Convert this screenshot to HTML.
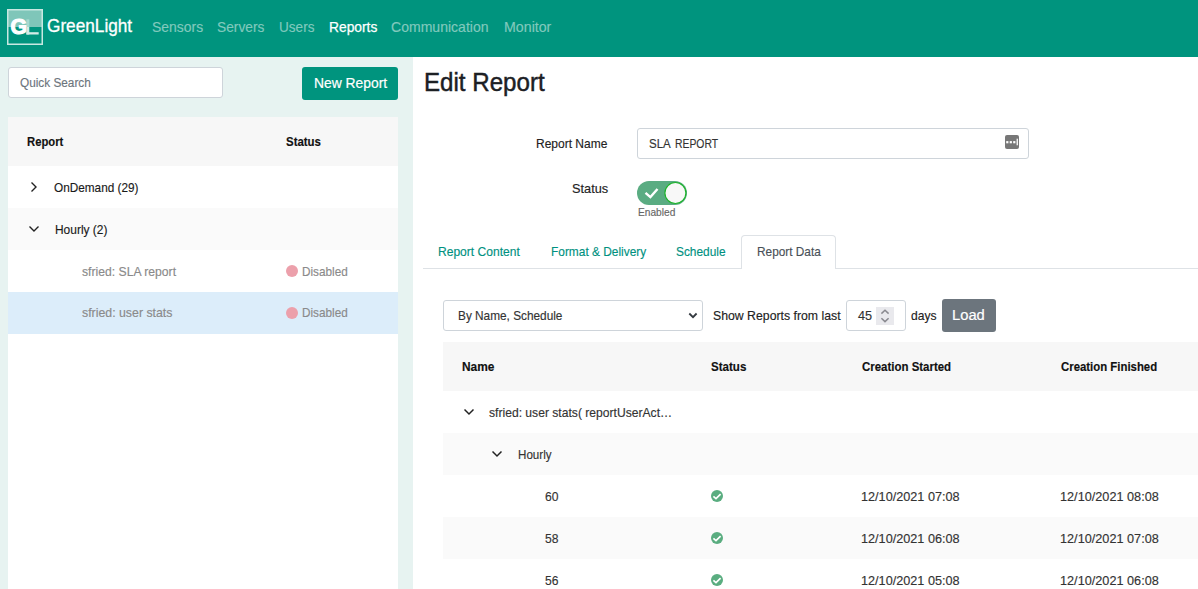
<!DOCTYPE html>
<html><head><meta charset="utf-8"><style>
html,body{margin:0;padding:0;width:1198px;height:589px;overflow:hidden;background:#fff;position:relative;font-family:"Liberation Sans",sans-serif}
.t{position:absolute;white-space:nowrap;transform-origin:0 0;-webkit-text-stroke-width:0.15px}
.b{position:absolute}
</style></head><body>
<div class="b" style="left:0;top:0;width:1198px;height:57px;background:#00947e"></div>
<div class="b" style="left:0;top:57px;width:413px;height:532px;background:#e7f3f1"></div>
<div class="b" style="left:8px;top:67px;width:213px;height:29px;border:1px solid #ced4da;border-radius:3px;background:#fff"></div>
<div class="b" style="left:302px;top:67px;width:96px;height:33px;border-radius:3px;background:#00947e"></div>
<div class="b" style="left:8px;top:117px;width:390px;height:472px;background:#fff"></div>
<div class="b" style="left:8px;top:117px;width:390px;height:49px;background:#f7f7f7"></div>
<div class="b" style="left:8px;top:208px;width:390px;height:42px;background:#fafafa"></div>
<div class="b" style="left:8px;top:292px;width:390px;height:42px;background:#dcedfa"></div>
<div class="b" style="left:637px;top:128px;width:390px;height:29px;border:1px solid #ced4da;border-radius:3px;background:#fff"></div>
<div class="b" style="left:423px;top:268px;width:775px;height:1px;background:#dee2e6"></div>
<div class="b" style="left:741px;top:235px;width:93px;height:33px;border:1px solid #dee2e6;border-bottom:none;border-radius:4px 4px 0 0;background:#fff"></div>
<div class="b" style="left:443px;top:300px;width:258px;height:29px;border:1px solid #ced4da;border-radius:3px;background:#fff"></div>
<div class="b" style="left:846px;top:300px;width:58px;height:29px;border:1px solid #ced4da;border-radius:3px;background:#fff"></div>
<div class="b" style="left:942px;top:299px;width:54px;height:33px;border-radius:3px;background:#6c757d"></div>
<div class="b" style="left:443px;top:342px;width:755px;height:49px;background:#f7f7f7"></div>
<div class="b" style="left:443px;top:433px;width:755px;height:42px;background:#fafafa"></div>
<div class="b" style="left:443px;top:517px;width:755px;height:42px;background:#fafafa"></div>
<svg class="b" style="left:0;top:0" width="1198" height="589" viewBox="0 0 1198 589">
<!-- logo -->
<rect x="7" y="9" width="36" height="18" fill="#7fc6b9"/>
<rect x="7.75" y="9.75" width="34.5" height="34.5" fill="none" stroke="#c8e8e2" stroke-width="1.5"/>
<rect x="26.4" y="19.3" width="2.9" height="7.7" fill="#a6d9d0"/>
<rect x="26.4" y="27" width="2.9" height="7.5" fill="#d2ece7"/>
<rect x="26.4" y="32.2" width="12.3" height="2.3" fill="#d2ece7"/>
<text x="10.6" y="34.0" font-family="Liberation Sans" font-weight="700" font-size="21.3" fill="#fff" stroke="#fff" stroke-width="1.1">G</text>
<!-- chevrons left table -->
<path d="M31.5 182.5 L36 187 L31.5 191.5" fill="none" stroke="#222" stroke-width="1.4"/>
<path d="M29.5 226.5 L34 231 L38.5 226.5" fill="none" stroke="#222" stroke-width="1.4"/>
<!-- disabled dots -->
<circle cx="292" cy="271" r="6" fill="#eca0ab"/>
<circle cx="292" cy="313" r="6" fill="#eca0ab"/>
<!-- input icon -->
<rect x="1005" y="135" width="14" height="14" rx="2" fill="#777"/>
<rect x="1006.2" y="141.1" width="2.2" height="2.2" fill="#fff"/><rect x="1009.7" y="141.1" width="2.2" height="2.2" fill="#fff"/><rect x="1013.2" y="141.1" width="2.2" height="2.2" fill="#fff"/>
<rect x="1016.6" y="138.7" width="1.3" height="6.6" fill="#fff"/>
<!-- toggle -->
<rect x="637" y="181" width="50" height="24" rx="12" fill="#5aac82"/>
<circle cx="675.4" cy="193" r="10.5" fill="#f8f8f8" stroke="#1db32a" stroke-width="1.15"/>
<path d="M645.5 192.8 L650.4 197.1 L657.5 189" fill="none" stroke="#fff" stroke-width="2.4"/>
<!-- select chevron -->
<path d="M689.3 313.5 L693 317.2 L696.6 313.5" fill="none" stroke="#343a40" stroke-width="1.8"/>
<!-- spinner -->
<rect x="876" y="307" width="18" height="18" fill="#e9e9ed"/>
<path d="M881.4 313.6 L885 310.2 L888.6 313.6 M881.4 318.2 L885 321.6 L888.6 318.2" fill="none" stroke="#8a8a90" stroke-width="1.5"/>
<!-- data chevrons -->
<path d="M464.5 409.5 L469 414 L473.5 409.5" fill="none" stroke="#222" stroke-width="1.45"/>
<path d="M492.5 451.5 L497 456 L501.5 451.5" fill="none" stroke="#222" stroke-width="1.45"/>
<!-- check circles -->
<g id="cc"><circle cx="717" cy="496" r="6" fill="#5aad80"/><path d="M713.4 496.3 L716 498.6 L720.6 494.2" fill="none" stroke="#fff" stroke-width="1.7"/></g>
<use href="#cc" y="42"/>
<use href="#cc" y="84"/>
</svg>

<span class="t" style="left:46.50px;top:16.94px;font-size:18.5px;line-height:18.5px;color:#fff;font-weight:400;transform:scaleX(0.9299);-webkit-text-stroke:0.3px #fff;">GreenLight</span><span class="t" style="left:152.00px;top:19.53px;font-size:14.5px;line-height:14.5px;color:#80c9bd;font-weight:400;transform:scaleX(0.9615);">Sensors</span><span class="t" style="left:217.00px;top:19.53px;font-size:14.5px;line-height:14.5px;color:#80c9bd;font-weight:400;transform:scaleX(0.9486);">Servers</span><span class="t" style="left:279.00px;top:19.53px;font-size:14.5px;line-height:14.5px;color:#80c9bd;font-weight:400;transform:scaleX(0.9357);">Users</span><span class="t" style="left:328.50px;top:19.53px;font-size:14.5px;line-height:14.5px;color:#fff;font-weight:400;transform:scaleX(0.9524);-webkit-text-stroke:0.25px #fff;">Reports</span><span class="t" style="left:391.00px;top:19.53px;font-size:14.5px;line-height:14.5px;color:#80c9bd;font-weight:400;transform:scaleX(0.9681);">Communication</span><span class="t" style="left:504.00px;top:19.53px;font-size:14.5px;line-height:14.5px;color:#80c9bd;font-weight:400;transform:scaleX(0.9794);">Monitor</span><span class="t" style="left:19.50px;top:77.02px;font-size:12.5px;line-height:12.5px;color:#6c757d;font-weight:400;transform:scaleX(0.9435);">Quick Search</span><span class="t" style="left:314.00px;top:75.93px;font-size:14.5px;line-height:14.5px;color:#fff;font-weight:400;transform:scaleX(0.9555);-webkit-text-stroke:0.2px #fff;">New Report</span><span class="t" style="left:26.50px;top:136.02px;font-size:12.5px;line-height:12.5px;color:#111;font-weight:700;transform:scaleX(0.9003);">Report</span><span class="t" style="left:286.00px;top:136.02px;font-size:12.5px;line-height:12.5px;color:#111;font-weight:700;transform:scaleX(0.9147);">Status</span><span class="t" style="left:54.00px;top:180.73px;font-size:13.2px;line-height:13.2px;color:#1a1a1a;font-weight:400;transform:scaleX(0.8936);">OnDemand (29)</span><span class="t" style="left:54.50px;top:222.53px;font-size:13.2px;line-height:13.2px;color:#1a1a1a;font-weight:400;transform:scaleX(0.9056);">Hourly (2)</span><span class="t" style="left:82.00px;top:265.86px;font-size:12.8px;line-height:12.8px;color:#8a8a8a;font-weight:400;transform:scaleX(0.9511);">sfried: SLA report</span><span class="t" style="left:301.50px;top:265.86px;font-size:12.8px;line-height:12.8px;color:#8a8a8a;font-weight:400;transform:scaleX(0.9200);">Disabled</span><span class="t" style="left:82.00px;top:307.46px;font-size:12.8px;line-height:12.8px;color:#8a8a8a;font-weight:400;transform:scaleX(0.9635);">sfried: user stats</span><span class="t" style="left:301.50px;top:307.46px;font-size:12.8px;line-height:12.8px;color:#8a8a8a;font-weight:400;transform:scaleX(0.9200);">Disabled</span><span class="t" style="left:424.00px;top:69.54px;font-size:25px;line-height:25px;color:#1c2024;font-weight:400;transform:scaleX(0.9646);-webkit-text-stroke:0.45px #1c2024;">Edit Report</span><span class="t" style="left:535.50px;top:136.83px;font-size:13.2px;line-height:13.2px;color:#222;font-weight:400;transform:scaleX(0.9103);">Report Name</span><span class="t" style="left:648.50px;top:137.53px;font-size:12.6px;line-height:12.6px;color:#333;font-weight:400;transform:scaleX(0.9140);">SLA</span><span class="t" style="left:674.50px;top:137.53px;font-size:12.6px;line-height:12.6px;color:#333;font-weight:400;transform:scaleX(0.8233);">REPORT</span><span class="t" style="left:571.50px;top:181.63px;font-size:13.2px;line-height:13.2px;color:#222;font-weight:400;transform:scaleX(0.9669);">Status</span><span class="t" style="left:637.50px;top:206.82px;font-size:11.2px;line-height:11.2px;color:#666;font-weight:400;transform:scaleX(0.9104);">Enabled</span><span class="t" style="left:438.00px;top:244.90px;font-size:13px;line-height:13px;color:#00917f;font-weight:400;transform:scaleX(0.9273);">Report Content</span><span class="t" style="left:551.00px;top:244.90px;font-size:13px;line-height:13px;color:#00917f;font-weight:400;transform:scaleX(0.9154);">Format &amp; Delivery</span><span class="t" style="left:676.00px;top:244.90px;font-size:13px;line-height:13px;color:#00917f;font-weight:400;transform:scaleX(0.9139);">Schedule</span><span class="t" style="left:756.50px;top:244.90px;font-size:13px;line-height:13px;color:#495057;font-weight:400;transform:scaleX(0.9105);">Report Data</span><span class="t" style="left:458.00px;top:309.40px;font-size:13px;line-height:13px;color:#333;font-weight:400;transform:scaleX(0.9088);">By Name, Schedule</span><span class="t" style="left:712.50px;top:309.03px;font-size:13.2px;line-height:13.2px;color:#222;font-weight:400;transform:scaleX(0.9310);">Show Reports from last</span><span class="t" style="left:857.50px;top:309.20px;font-size:13px;line-height:13px;color:#333;font-weight:400;transform:scaleX(0.9734);">45</span><span class="t" style="left:911.00px;top:309.03px;font-size:13.2px;line-height:13.2px;color:#222;font-weight:400;transform:scaleX(0.9148);">days</span><span class="t" style="left:952.00px;top:307.08px;font-size:15.5px;line-height:15.5px;color:#fff;font-weight:400;transform:scaleX(0.9516);-webkit-text-stroke:0.2px #fff;">Load</span><span class="t" style="left:461.50px;top:360.52px;font-size:12.5px;line-height:12.5px;color:#111;font-weight:700;transform:scaleX(0.9530);">Name</span><span class="t" style="left:711.00px;top:360.52px;font-size:12.5px;line-height:12.5px;color:#111;font-weight:700;transform:scaleX(0.9252);">Status</span><span class="t" style="left:861.50px;top:360.52px;font-size:12.5px;line-height:12.5px;color:#111;font-weight:700;transform:scaleX(0.9164);">Creation Started</span><span class="t" style="left:1061.00px;top:360.52px;font-size:12.5px;line-height:12.5px;color:#111;font-weight:700;transform:scaleX(0.9106);">Creation Finished</span><span class="t" style="left:489.00px;top:406.10px;font-size:13px;line-height:13px;color:#333;font-weight:400;transform:scaleX(0.9320);">sfried: user stats( reportUserAct…</span><span class="t" style="left:518.00px;top:448.10px;font-size:13px;line-height:13px;color:#333;font-weight:400;transform:scaleX(0.8927);">Hourly</span><span class="t" style="left:545.00px;top:490.20px;font-size:13px;line-height:13px;color:#333;font-weight:400;transform:scaleX(0.9311);">60</span><span class="t" style="left:861.00px;top:490.20px;font-size:13px;line-height:13px;color:#333;font-weight:400;transform:scaleX(0.9743);">12/10/2021 07:08</span><span class="t" style="left:1060.00px;top:490.20px;font-size:13px;line-height:13px;color:#333;font-weight:400;transform:scaleX(0.9760);">12/10/2021 08:08</span><span class="t" style="left:545.00px;top:532.20px;font-size:13px;line-height:13px;color:#333;font-weight:400;transform:scaleX(0.9311);">58</span><span class="t" style="left:861.00px;top:532.20px;font-size:13px;line-height:13px;color:#333;font-weight:400;transform:scaleX(0.9743);">12/10/2021 06:08</span><span class="t" style="left:1060.00px;top:532.20px;font-size:13px;line-height:13px;color:#333;font-weight:400;transform:scaleX(0.9760);">12/10/2021 07:08</span><span class="t" style="left:545.00px;top:574.20px;font-size:13px;line-height:13px;color:#333;font-weight:400;transform:scaleX(0.9311);">56</span><span class="t" style="left:861.00px;top:574.20px;font-size:13px;line-height:13px;color:#333;font-weight:400;transform:scaleX(0.9743);">12/10/2021 05:08</span><span class="t" style="left:1060.00px;top:574.20px;font-size:13px;line-height:13px;color:#333;font-weight:400;transform:scaleX(0.9760);">12/10/2021 06:08</span>
</body></html>
